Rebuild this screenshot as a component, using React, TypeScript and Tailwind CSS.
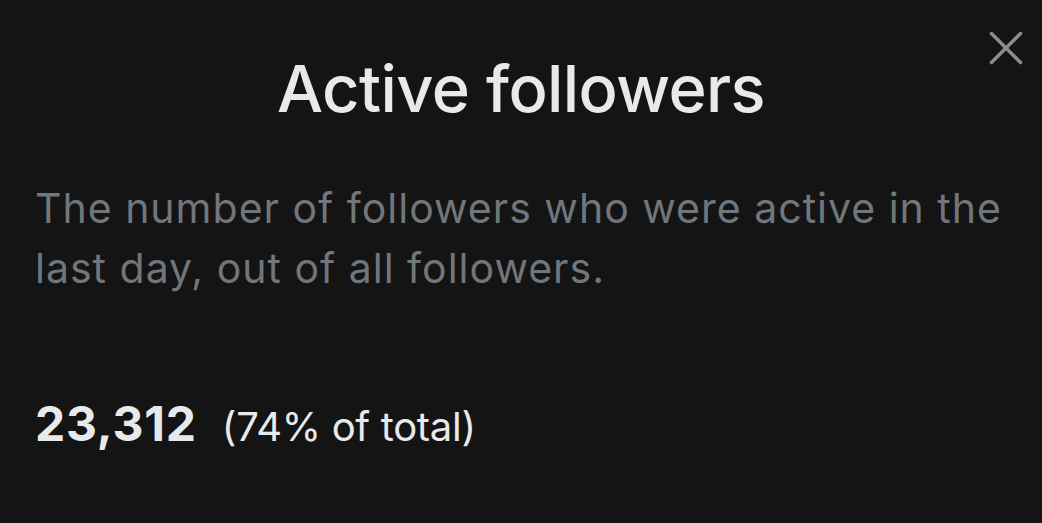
import { X } from "lucide-react";

export default function App() {
  return (
    <div
      className="relative w-[1042px] h-[523px] bg-[#141414] text-[#e7e9ea] flex flex-col px-[35px] overflow-hidden"
      style={{ fontFamily: "Inter, 'Noto Sans', sans-serif" }}
    >
      <button
        aria-label="Close"
        className="absolute right-[7px] top-[19px] text-[#8b8b8b]"
      >
        <X size={58} strokeWidth={1.45} />
      </button>

      <h1 className="pt-[49px] text-center text-[65px] leading-[80px] font-medium tracking-[-0.6px]">
        Active followers
      </h1>

      <p className="mt-[49px] text-[41px] leading-[60px] tracking-[1px] text-[#71767b]">
        The number of followers who were active in the last day, out of all followers.
      </p>

      <div className="mt-[96px] flex items-baseline gap-[25px] leading-[60px]">
        <span className="text-[48px] font-bold tracking-[0.8px]">23,312</span>
        <span className="text-[40px] tracking-[-0.3px]">(74% of total)</span>
      </div>
    </div>
  );
}
